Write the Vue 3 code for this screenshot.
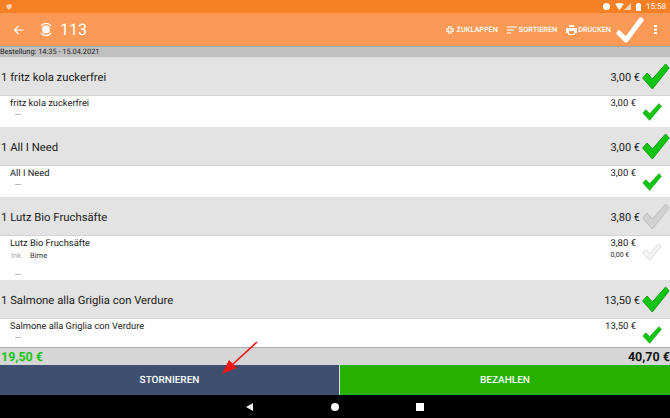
<script setup>
const orders = [
  { id: 1, name: 'fritz kola zuckerfrei', price: '3,00 €', dh: 32 },
  { id: 2, name: 'All I Need', price: '3,00 €', dh: 32 },
  { id: 3, name: 'Lutz Bio Fruchsäfte', price: '3,80 €', dh: 45, off: true, extra: { label: 'Ink.', name: 'Birne', price: '0,00 €' } },
  { id: 4, name: 'Salmone alla Griglia con Verdure', price: '13,50 €', dh: 29 },
]
const check = 'M3 15 L8 10 L14 16 L29 1 L33 5 L14 26 Z'
</script>

<template>
  <div class="screen">
    <div class="status">
      <svg class="notif" width="8" height="8" viewBox="0 0 8 8"><path d="M1 2 L6 1 L7 4 L4 7 L2 5 Z" fill="#fbd3b0" /></svg>
      <div class="status-right">
        <span class="dnd"></span>
        <svg class="wifi" width="9" height="7" viewBox="0 0 10 8"><path d="M0 1 Q5 -1 10 1 L5 8 Z" fill="#fff" /></svg>
        <svg width="7" height="7" viewBox="0 0 8 8"><path d="M0 8 L8 0 V8 Z" fill="#fbd3b0" /></svg>
        <svg class="battery" width="5" height="8" viewBox="0 0 5 8"><path d="M1 0 H4 V1 H5 V8 H0 V1 H1 Z" fill="#fff" /></svg>
        <span class="time">15:58</span>
      </div>
    </div>

    <header class="toolbar">
      <svg class="back" width="11" height="10" viewBox="0 0 11 10"><path d="M10.5 5 H1.5 M5.5 1 L1.5 5 L5.5 9" fill="none" stroke="#fff" stroke-width="1.2" /></svg>
      <svg class="table-icon" width="14" height="17" viewBox="0 0 16 18">
        <circle cx="8" cy="9" r="4.6" fill="#fff" />
        <path d="M2 5 Q8 -1 14 5 M2 13 Q8 19 14 13" fill="none" stroke="#fff" stroke-width="1.3" />
      </svg>
      <span class="table-no">113</span>
      <div class="actions">
        <button class="action zu">
          <svg width="8" height="8" viewBox="0 0 11 11"><path d="M4 0 V4 H0 M7 0 V4 H11 M4 11 V7 H0 M7 11 V7 H11" fill="none" stroke="#fff" stroke-width="1.6" /></svg>
          ZUKLAPPEN
        </button>
        <button class="action">
          <svg width="10" height="8" viewBox="0 0 10 8"><path d="M0 1 H10 M0 4 H7 M0 7 H4" fill="none" stroke="#fff" stroke-width="1.2" /></svg>
          SORTIEREN
        </button>
        <button class="action print">
          <svg width="11" height="10" viewBox="0 0 11 10"><path d="M3 0 H8 V2 H3 Z M0 3 H11 V8 H9 V10 H2 V8 H0 Z" fill="#fff" /><rect x="3" y="6" width="5" height="3" fill="#fb9a56" /></svg>
          DRUCKEN
        </button>
      </div>
      <svg class="big-check" width="28" height="26" viewBox="0 0 28 26"><path d="M3 16 L10 23 L25 3" fill="none" stroke="#fff" stroke-width="5" stroke-linecap="round" stroke-linejoin="round" /></svg>
      <svg class="more" width="3" height="9" viewBox="0 0 3 9"><path d="M0 0 H3 V2 H0 Z M0 3.5 H3 V5.5 H0 Z M0 7 H3 V9 H0 Z" fill="#fff" /></svg>
    </header>

    <div class="order-info">Bestellung: 14:35 - 15.04.2021</div>

    <main class="orders">
      <section v-for="o in orders" :key="o.id">
        <div class="head">
          <span class="head-name">1 {{ o.name }}</span>
          <span class="head-price">{{ o.price }}</span>
          <svg class="check-big" :class="{ off: o.off }" width="30" height="27" viewBox="0 0 34 27" preserveAspectRatio="none"><path :d="check" /></svg>
        </div>
        <div class="detail" :style="{ height: o.dh + 'px' }">
          <div class="detail-left">
            <div class="detail-name">{{ o.name }}</div>
            <div v-if="o.extra" class="extra"><span class="extra-label">{{ o.extra.label }}</span>{{ o.extra.name }}</div>
            <div class="dash" :class="{ late: o.extra }"></div>
          </div>
          <div class="detail-right">
            <div class="detail-price">{{ o.price }}</div>
            <div v-if="o.extra" class="extra-price">{{ o.extra.price }}</div>
          </div>
          <svg class="check-small" :class="{ off: o.off }" width="21" height="18" viewBox="0 0 34 27" preserveAspectRatio="none"><path :d="check" /></svg>
        </div>
      </section>
    </main>

    <div class="totals">
      <span class="paid">19,50 €</span>
      <span class="sum">40,70 €</span>
    </div>

    <div class="buttons">
      <button class="btn cancel">STORNIEREN</button>
      <button class="btn pay">BEZAHLEN</button>
    </div>

    <nav class="navbar">
      <span class="tri"></span>
      <span class="dot"></span>
      <span class="sq"></span>
    </nav>

    <svg class="arrow" width="40" height="36" viewBox="0 0 40 36">
      <path d="M37 1 L12 24" stroke="#f01414" stroke-width="1.6" fill="none" />
      <path d="M2 33 L9 19 L17 27 Z" fill="#f01414" />
    </svg>
  </div>
</template>

<style>
html, body { margin: 0; background: #fff; }
</style>

<style scoped>
.screen {
  position: relative;
  width: 670px;
  height: 418px;
  overflow: hidden;
  display: flex;
  flex-direction: column;
  font-family: Roboto, "Liberation Sans", sans-serif;
  color: #1a1a1a;
  text-rendering: geometricPrecision;
}
.status {
  height: 13px;
  background: #f58026;
  display: flex;
  align-items: center;
  justify-content: space-between;
  padding: 0 4px 0 5px;
}
.status-right {
  display: flex;
  align-items: center;
}
.dnd {
  width: 7px;
  height: 7px;
  border-radius: 50%;
  background: #fff;
}
.wifi { margin-left: 5px; }
.battery { margin-left: 5px; }
.time {
  color: #fff;
  font-size: 8px;
  margin-left: 5px;
}
.toolbar {
  height: 33px;
  background: #fb9a56;
  display: flex;
  align-items: center;
  color: #fff;
  padding-left: 13px;
  border-bottom: 1px solid #aaa;
}
.table-icon { margin-left: 15px; }
.table-no {
  font-size: 16px;
  margin-left: 7px;
}
.actions {
  margin-left: auto;
  display: flex;
  gap: 9px;
}
.action {
  display: flex;
  align-items: center;
  gap: 2px;
  background: none;
  border: 0;
  padding: 0;
  color: #fff;
  font: 500 7.3px Roboto, sans-serif;
  text-rendering: geometricPrecision;
}
.zu { gap: 3px; }
.print { gap: 1px; }
.big-check { margin-left: 5px; }
.more { margin: 0 13px 0 10px; }
.order-info {
  height: 10px;
  background: #c0c0c0;
  font-size: 7.4px;
  line-height: 10px;
  border-bottom: 1px solid #d8d8d8;
}
.orders { flex: 1; overflow: hidden; }
.head {
  height: 38px;
  box-sizing: border-box;
  padding-top: 2px;
  background: #e3e3e3;
  display: flex;
  align-items: center;
  border-bottom: 1px solid #d4d4d4;
  position: relative;
}
.head-name {
  font-size: 11.3px;
  margin-left: 1px;
}
.head-price {
  margin-left: auto;
  margin-right: 30px;
  font-size: 11px;
}
.check-big, .check-small { fill: #12c512; stroke: #0a9a0a; stroke-width: 1; }
.check-big { position: absolute; right: 0; top: 5px; }
.check-big.off { fill: #d2d2d2; stroke: #bbb; }
.check-small.off { fill: #f4f4f4; stroke: #ccc; }
.detail {
  background: #fff;
  display: flex;
  box-sizing: border-box;
  position: relative;
  border-bottom: 1px solid #e3e3e3;
  padding-top: 1px;
}
.detail-left { padding-left: 10px; flex: 1; }
.detail-name { font-size: 9.3px; line-height: 13px; }
.extra {
  font-size: 7.5px;
  line-height: 11px;
  color: #333;
}
.extra-label {
  color: #aaa;
  margin: 0 7px 0 1px;
}
.dash {
  width: 6px;
  height: 1px;
  background: #bbb;
  margin: 4px 0 0 5px;
}
.dash.late { margin-top: 13px; }
.detail-right {
  margin-right: 34px;
}
.detail-price { font-size: 9.5px; line-height: 13px; text-align: right; }
.extra-price { font-size: 7px; line-height: 11px; text-align: left; }
.check-small { position: absolute; right: 8px; top: 7px; }
.totals {
  height: 18px;
  box-sizing: border-box;
  padding: 2px 0 0 1px;
  background: #d6d6d6;
  border-top: 1px solid #aaa;
  display: flex;
  justify-content: space-between;
  align-items: center;
  font-weight: 700;
  font-size: 12.5px;
}
.paid { color: #12c512; }
.sum { color: #111; }
.buttons {
  height: 30px;
  display: flex;
  gap: 1px;
  background: #ddd;
}
.btn {
  border: 0;
  padding: 1px 0 0;
  color: #fff;
  font: 500 10px Roboto, sans-serif;
  text-rendering: geometricPrecision;
}
.cancel { width: 339px; background: #3e4f6f; }
.pay { flex: 1; background: #26b000; }
.navbar {
  height: 23px;
  background: #000;
  display: flex;
  align-items: center;
  padding-left: 246px;
}
.tri {
  width: 0;
  height: 0;
  border-style: solid;
  border-width: 4px 7px 4px 0;
  border-color: transparent #eee transparent transparent;
}
.dot {
  width: 8px;
  height: 8px;
  border-radius: 50%;
  background: #fff;
  margin-left: 78px;
}
.sq {
  width: 8px;
  height: 8px;
  background: #fff;
  margin-left: 77px;
}
.arrow {
  position: absolute;
  left: 220px;
  top: 341px;
}
</style>
